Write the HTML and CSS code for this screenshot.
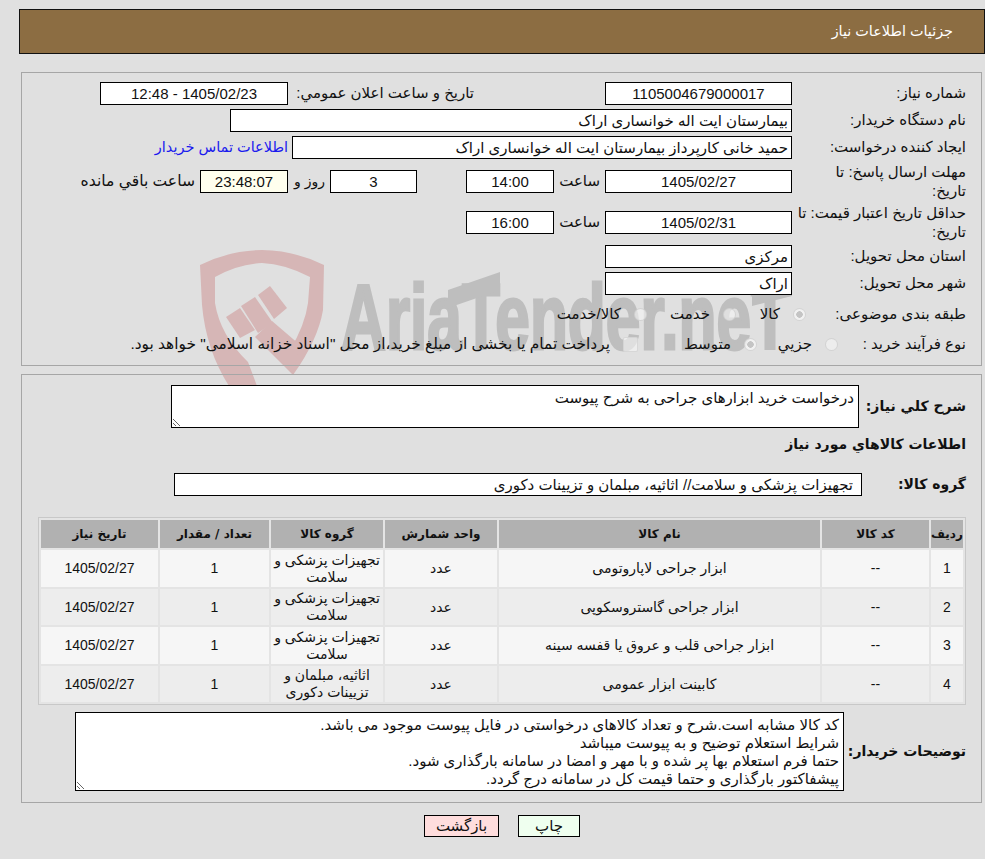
FILE: index.html
```html
<!DOCTYPE html>
<html lang="fa" dir="rtl">
<head>
<meta charset="utf-8">
<title>جزئیات اطلاعات نیاز</title>
<link rel="stylesheet" href="styles.css">
</head>
<body>
<svg class="watermark" width="985" height="859" viewBox="0 0 985 859" aria-hidden="true">
  <path class="wm-red" d="M200 265 Q231 250 262 250 Q293 250 324 265 L323 310 Q318 340 293 375 L290 350 Q305 325 308 303 L310 277 Q285 264 262 263 Q238 264 215 277 L215 303 Q220 335 248 362 L257 386 L229 386 Q206 350 202 305 Z"/>
  <path class="wm-red" d="M255 337 L272 321 L300 345 L293 375 Z"/>
  <path class="wm-red" d="M226 317 L240 308 L255 330 L240 338 Z"/>
  <path class="wm-red" d="M241 306 L255 297 L273 323 L258 333 Z"/>
  <path class="wm-red" d="M258 295 L270 286 L287 308 L274 319 Z"/>
  <text class="wm-text" x="341" y="349" textLength="448" lengthAdjust="spacingAndGlyphs">AriaTender.neT</text>
  <path class="wm-grey" d="M448 290 L500 272 L500 290 L448 308 Z"/>
  <path class="wm-grey" d="M752 292 L792 280 L792 296 L752 306 Z"/>
</svg>

<header class="title-bar">جزئیات اطلاعات نیاز</header>

<section class="panel panel-info">
  <div class="row">
    <label class="lab">شماره نیاز:</label>
    <input class="field w-date center" readonly value="1105004679000017">
    <label class="pub-label">تاریخ و ساعت اعلان عمومي:</label>
    <input class="field w-pub center" readonly value="1405/02/23 - 12:48">
  </div>
  <div class="row">
    <label class="lab">نام دستگاه خریدار:</label>
    <input class="field w-buyer" readonly value="بیمارستان ایت اله خوانساری اراک">
  </div>
  <div class="row">
    <label class="lab">ایجاد کننده درخواست:</label>
    <input class="field w-creator" readonly value="حمید خانی کارپرداز بیمارستان ایت اله خوانساری اراک">
    <a class="contact" href="#">اطلاعات تماس خریدار</a>
  </div>
  <div class="row">
    <label class="lab lab-two">مهلت ارسال پاسخ: تا<br>تاریخ:</label>
    <input class="field w-date center" readonly value="1405/02/27">
    <span class="hour">ساعت</span>
    <input class="field w-time center" readonly value="14:00">
    <input class="field w-days center" readonly value="3">
    <span class="days-label">روز و</span>
    <input class="field w-time center remain" readonly value="23:48:07">
    <span class="remain-label">ساعت باقي مانده</span>
  </div>
  <div class="row">
    <label class="lab lab-two">حداقل تاریخ اعتبار قیمت: تا<br>تاریخ:</label>
    <input class="field w-date center" readonly value="1405/02/31">
    <span class="hour">ساعت</span>
    <input class="field w-time center" readonly value="16:00">
  </div>
  <div class="row">
    <label class="lab">استان محل تحویل:</label>
    <input class="field w-date" readonly value="مرکزی">
  </div>
  <div class="row">
    <label class="lab">شهر محل تحویل:</label>
    <input class="field w-date" readonly value="اراک">
  </div>
  <div class="row row-options">
    <label class="lab-subject">طبقه بندی موضوعی:</label>
    <span class="opt opt-goods"><i class="radio checked"></i>کالا</span>
    <span class="opt opt-service"><i class="radio"></i>خدمت</span>
    <span class="opt"><i class="radio"></i>کالا/خدمت</span>
  </div>
  <div class="row row-process">
    <label class="lab-process">نوع فرآیند خرید :</label>
    <span class="opt opt-small"><i class="radio"></i>جزیي</span>
    <span class="opt opt-mid"><i class="radio checked"></i>متوسط</span>
    <span class="opt opt-long"><i class="check"></i>پرداخت تمام یا بخشی از مبلغ خرید،از محل "اسناد خزانه اسلامی" خواهد بود.</span>
  </div>
</section>

<section class="panel panel-goods">
  <div class="row">
    <label class="lab-bold lab-desc">شرح کلي نیاز:</label>
    <textarea class="area area-desc" readonly>درخواست خرید ابزارهای جراحی به شرح پیوست</textarea>
  </div>
  <h2 class="goods-title">اطلاعات کالاهاي مورد نیاز</h2>
  <div class="row">
    <label class="lab-bold lab-group">گروه کالا:</label>
    <input class="field w-group" readonly value="تجهیزات پزشکی و سلامت// اثاثیه، مبلمان و تزیینات دکوری">
  </div>
  <table class="goods">
    <colgroup>
      <col class="c-idx"><col class="c-code"><col class="c-name"><col class="c-unit"><col class="c-cat"><col class="c-qty"><col class="c-date">
    </colgroup>
    <thead>
      <tr><th>ردیف</th><th>کد کالا</th><th>نام کالا</th><th>واحد شمارش</th><th>گروه کالا</th><th>تعداد / مقدار</th><th>تاریخ نیاز</th></tr>
    </thead>
    <tbody>
      <tr><td>1</td><td>--</td><td>ابزار جراحی لاپاروتومی</td><td>عدد</td><td>تجهیزات پزشکی و سلامت</td><td>1</td><td>1405/02/27</td></tr>
      <tr><td>2</td><td>--</td><td>ابزار جراحی گاستروسکوپی</td><td>عدد</td><td>تجهیزات پزشکی و سلامت</td><td>1</td><td>1405/02/27</td></tr>
      <tr><td>3</td><td>--</td><td>ابزار جراحی قلب و عروق یا قفسه سینه</td><td>عدد</td><td>تجهیزات پزشکی و سلامت</td><td>1</td><td>1405/02/27</td></tr>
      <tr><td>4</td><td>--</td><td>کابینت ابزار عمومی</td><td>عدد</td><td>اثاثیه، مبلمان و تزیینات دکوری</td><td>1</td><td>1405/02/27</td></tr>
    </tbody>
  </table>
  <div class="row row-notes">
    <label class="lab-bold lab-notes">توضیحات خریدار:</label>
    <textarea class="area area-notes" readonly>کد کالا مشابه است.شرح و تعداد کالاهای درخواستی در فایل پیوست موجود می باشد.
شرایط استعلام توضیح و به پیوست میباشد
حتما فرم استعلام بها پر شده و با مهر و امضا در سامانه بارگذاری شود.
پیشفاکتور بارگذاری و حتما قیمت کل در سامانه درج گردد.</textarea>
  </div>
</section>

<div class="actions">
  <button class="btn btn-print" type="button">چاپ</button>
  <button class="btn btn-back" type="button">بازگشت</button>
</div>
</body>
</html>
```

FILE: styles.css
```css
html { background: #e0e0e0; }
body {
  margin: 0;
  width: 985px;
  height: 859px;
  overflow: hidden;
  position: relative;
  font: 15px/18.5px "Liberation Sans", "DejaVu Sans", sans-serif;
  color: #111;
}
.watermark { position: absolute; left: 0; top: 0; z-index: -1; pointer-events: none; direction: ltr; }
.wm-red { fill: #d6b6b6; }
.wm-grey { fill: #bebebe; }
.wm-text { font: bold 92px "Liberation Sans", sans-serif; fill: #bebebe; stroke: #bebebe; stroke-width: 3px; }

.title-bar {
  box-sizing: border-box;
  margin: 9px 0 0 19px;
  width: 966px;
  height: 45px;
  padding: 12px 31px 0 0;
  background: #8c6d42;
  border: 1px solid #111;
  color: #fff;
  font-size: 14.4px;
}
.panel {
  box-sizing: border-box;
  width: 961px;
  margin-right: 3px;
  border: 1px solid #a6a6a6;
  padding: 9px 15px 11px 0;
}
.panel-info { margin-top: 18px; height: 294px; }
.panel-goods { margin-top: 8px; height: 429px; padding-top: 10px; }

.row { display: flex; align-items: center; margin-bottom: 4px; }
.lab { width: 168px; margin-left: 6px; flex: none; }
.lab-two { white-space: nowrap; }
.field {
  box-sizing: border-box;
  height: 23px;
  border: 1px solid #000;
  background: #fff;
  padding: 0 3px;
  margin: 0;
  font: inherit;
  color: #111;
  border-radius: 0;
  outline: none;
  flex: none;
}
.center { text-align: center; }
.w-date { width: 187px; }
.w-pub { width: 188px; }
.w-buyer { width: 562px; }
.w-creator { width: 500px; }
.w-time { width: 88px; }
.w-days { width: 87px; margin-right: 49px; }
.w-group { width: 688px; padding-right: 8px; }
.remain { background: #ffffee; }
.pub-label { margin-right: 131px; width: 181px; margin-left: 5px; white-space: nowrap; }
.contact { margin-right: 4px; color: #1a1aee; text-decoration: none; white-space: nowrap; font-size: 14.5px; }
.hour { width: 42px; margin: 0 5px 0 4px; white-space: nowrap; }
.days-label { width: 32px; margin: 0 5px; white-space: nowrap; font-size: 14px; }
.remain-label { margin-right: 5px; white-space: nowrap; font-size: 15.6px; }

.row-options { height: 30px; margin-bottom: 4px; }
.row-process { height: 22px; margin-bottom: 0; }
.lab-subject { width: 160px; flex: none; }
.lab-process { width: 128px; flex: none; }
.opt { display: flex; align-items: center; gap: 13px; white-space: nowrap; }
.opt-goods { width: 70px; }
.opt-service { width: 89px; }
.opt-small { width: 81px; }
.opt-mid { width: 119px; }
.opt-long { font-size: 15.4px; }
.radio {
  box-sizing: border-box;
  width: 13px;
  height: 13px;
  border-radius: 50%;
  border: 1px solid rgba(205, 205, 205, 0.8);
  background: rgba(245, 245, 245, 0.6);
  flex: none;
}
.radio.checked { background: radial-gradient(circle, #c4c4c4 0 3px, rgba(245, 245, 245, 0.8) 3.5px); }
.check {
  box-sizing: border-box;
  width: 15px;
  height: 15px;
  border: 1px solid rgba(210, 210, 210, 0.8);
  border-radius: 2px;
  background: rgba(245, 245, 245, 0.6);
  flex: none;
}

.lab-bold { font-weight: bold; font-size: 14px; white-space: nowrap; font-family: "DejaVu Sans", sans-serif; flex: none; }
.lab-desc { width: 107px; }
.lab-group { width: 104px; }
.lab-notes { width: 122px; }
.area {
  box-sizing: border-box;
  border: 1px solid #000;
  background: #fff;
  font: inherit;
  line-height: 18px;
  color: #111;
  padding: 3px 4px;
  margin: 0;
  border-radius: 0;
  outline: none;
  overflow: hidden;
  flex: none;
  display: block;
}
.area-desc { width: 688px; height: 43px; }
.area-notes { width: 769px; height: 79px; }
.goods-title {
  font: bold 14px/18px "DejaVu Sans", sans-serif;
  margin: 7px 0 20px;
}
.goods {
  table-layout: fixed;
  width: 928px;
  margin: 21px 0 7px 0;
  border: 1px solid #c8c8c8;
  border-spacing: 2px;
  background: #e4e4e4;
  text-align: center;
  font-size: 14px;
}
.c-idx { width: 32px; }
.c-code { width: 107px; }
.c-name { width: 321px; }
.c-unit { width: 112px; }
.c-cat { width: 112px; }
.c-qty { width: 109px; }
.c-date { width: 117px; }
.goods th {
  height: 28px;
  padding: 0;
  background: #b1b1b1;
  font: bold 12px/18px "DejaVu Sans", sans-serif;
}
.goods td {
  height: 37px;
  padding: 0;
  line-height: 17px;
  background: #f6f6f6;
}
.goods tbody tr:nth-child(even) td { height: 36px; background: #ededed; }
.row-notes { margin-bottom: 0; }

.actions {
  display: flex;
  margin: 12px 405px 0 0;
  gap: 19px;
}
.btn {
  box-sizing: border-box;
  height: 22px;
  border: 1px solid #000;
  font: inherit;
  color: #111;
  padding: 0;
  border-radius: 0;
}
.btn-print { width: 62px; background: #efffef; }
.btn-back { width: 75px; background: #ffdddd; }
```
